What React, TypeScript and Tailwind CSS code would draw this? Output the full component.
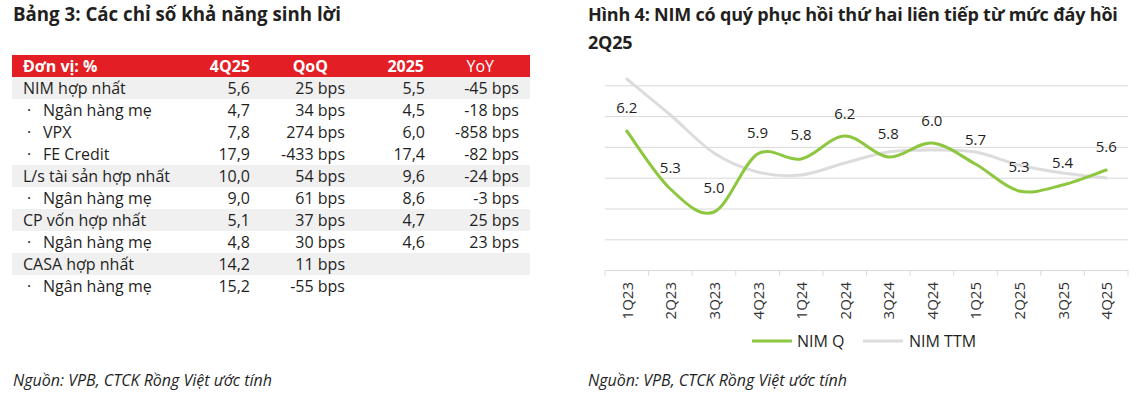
const rows = [
  { label: "NIM hợp nhất", sub: false, shade: true, q: "5,6", qoq: "25 bps", yr: "5,5", yoy: "-45 bps" },
  { label: "Ngân hàng mẹ", sub: true, shade: false, q: "4,7", qoq: "34 bps", yr: "4,5", yoy: "-18 bps" },
  { label: "VPX", sub: true, shade: false, q: "7,8", qoq: "274 bps", yr: "6,0", yoy: "-858 bps" },
  { label: "FE Credit", sub: true, shade: false, q: "17,9", qoq: "-433 bps", yr: "17,4", yoy: "-82 bps" },
  { label: "L/s tài sản hợp nhất", sub: false, shade: true, q: "10,0", qoq: "54 bps", yr: "9,6", yoy: "-24 bps" },
  { label: "Ngân hàng mẹ", sub: true, shade: false, q: "9,0", qoq: "61 bps", yr: "8,6", yoy: "-3 bps" },
  { label: "CP vốn hợp nhất", sub: false, shade: true, q: "5,1", qoq: "37 bps", yr: "4,7", yoy: "25 bps" },
  { label: "Ngân hàng mẹ", sub: true, shade: false, q: "4,8", qoq: "30 bps", yr: "4,6", yoy: "23 bps" },
  { label: "CASA hợp nhất", sub: false, shade: true, q: "14,2", qoq: "11 bps", yr: "", yoy: "" },
  { label: "Ngân hàng mẹ", sub: true, shade: false, q: "15,2", qoq: "-55 bps", yr: "", yoy: "" },
];

// chart data, page coordinates measured from the figure
const OX = 580;
const OY = 56;
const quarters = ["1Q23", "2Q23", "3Q23", "4Q23", "1Q24", "2Q24", "3Q24", "4Q24", "1Q25", "2Q25", "3Q25", "4Q25"];
const x0 = 605;
const x1 = 1128;
const step = (x1 - x0) / 12;
const cx = (i: number) => x0 + step * (i + 0.5) - OX;
const nimQ = [131, 189, 212, 154, 159, 136, 157, 143, 164, 191, 185, 170];
const nimTTM = [79, 115, 153, 172, 175, 163, 152, 150, 152, 165, 173, 178];
const labels = [
  { t: "6.2", y: 107 },
  { t: "5.3", y: 167 },
  { t: "5.0", y: 187 },
  { t: "5.9", y: 132 },
  { t: "5.8", y: 134 },
  { t: "6.2", y: 113 },
  { t: "5.8", y: 133 },
  { t: "6.0", y: 120 },
  { t: "5.7", y: 139 },
  { t: "5.3", y: 166 },
  { t: "5.4", y: 162 },
  { t: "5.6", y: 146 },
];
const grid = [55, 85.8, 116.6, 147.4, 178.2, 209, 239.8];
const axisY = 270.6;

function smooth(ys: number[]) {
  const p = ys.map((y, i) => [cx(i), y - OY]);
  let d = `M${p[0][0]},${p[0][1]}`;
  for (let i = 0; i < p.length - 1; i++) {
    const a = p[i - 1] || p[i];
    const b = p[i];
    const c = p[i + 1];
    const e = p[i + 2] || c;
    const c1x = b[0] + (c[0] - a[0]) / 6;
    const c1y = b[1] + (c[1] - a[1]) / 6;
    const c2x = c[0] - (e[0] - b[0]) / 6;
    const c2y = c[1] - (e[1] - b[1]) / 6;
    d += ` C${c1x},${c1y} ${c2x},${c2y} ${c[0]},${c[1]}`;
  }
  return d;
}

const font = { fontFamily: "'Open Sans', sans-serif" };

const NimChart = () => (
  <svg width={561} height={314} className="block" style={font}>
    {grid.map((g) => (
      <line key={g} x1={x0 - OX} x2={x1 - OX} y1={g - OY} y2={g - OY} stroke="#d9d9d9" strokeWidth={1} />
    ))}
    <line x1={x0 - OX} x2={x1 - OX} y1={axisY - OY} y2={axisY - OY} stroke="#d9d9d9" strokeWidth={1} />
    {Array.from({ length: 13 }).map((_, k) => (
      <line
        key={k}
        x1={x0 - OX + step * k}
        x2={x0 - OX + step * k}
        y1={axisY - OY}
        y2={axisY - OY + 5}
        stroke="#d9d9d9"
        strokeWidth={1}
      />
    ))}
    <path d={smooth(nimTTM)} fill="none" stroke="#dcdcdc" strokeWidth={3} strokeLinecap="round" />
    <path d={smooth(nimQ)} fill="none" stroke="#8dc63f" strokeWidth={3} strokeLinecap="round" />
    {labels.map((l, i) => (
      <text key={i} x={cx(i)} y={l.y - OY} textAnchor="middle" dominantBaseline="central" fontSize={15} fill="#1f1f1f">
        {l.t}
      </text>
    ))}
    {quarters.map((q, i) => (
      <text
        key={q}
        x={cx(i)}
        y={282 - OY}
        transform={`rotate(-90 ${cx(i)} ${282 - OY})`}
        textAnchor="end"
        dominantBaseline="central"
        fontSize={15}
        fill="#333333"
      >
        {q}
      </text>
    ))}
    {/* legend */}
    <line x1={752 - OX} x2={792 - OX} y1={341 - OY} y2={341 - OY} stroke="#8dc63f" strokeWidth={3} />
    <text x={797 - OX} y={341 - OY} dominantBaseline="central" fontSize={16} fill="#1f1f1f">
      NIM Q
    </text>
    <line x1={863 - OX} x2={903 - OX} y1={341 - OY} y2={341 - OY} stroke="#dcdcdc" strokeWidth={3} />
    <text x={909 - OX} y={341 - OY} dominantBaseline="central" fontSize={16} fill="#1f1f1f">
      NIM TTM
    </text>
  </svg>
);

export default function App() {
  return (
    <div className="flex w-[1141px] h-[401px] bg-white text-[#1f1f1f] overflow-hidden" style={font}>
      {/* Bảng 3 */}
      <div className="w-[580px] shrink-0 flex flex-col">
        <h2 className="pl-[13px] text-[18.7px] font-bold leading-[28px] text-[#231f20] whitespace-nowrap">
          Bảng 3: Các chỉ số khả năng sinh lời
        </h2>
        <div className="ml-[12px] mt-[27px] w-[518px] text-[16px]">
          <div className="grid grid-cols-[188px_50px_95px_81px_93px_11px] h-[22px] items-center bg-[#e31e24] text-white leading-none">
            <div className="pl-[11px] font-bold">Đơn vị: %</div>
            <div className="text-right font-bold">4Q25</div>
            <div className="text-right pr-[17px] font-bold">QoQ</div>
            <div className="text-right pr-[2px] font-bold">2025</div>
            <div className="text-right pr-[25px]">YoY</div>
            <div />
          </div>
          {rows.map((r, i) => (
            <div
              key={i}
              className={`grid grid-cols-[188px_50px_95px_81px_93px_11px] h-[22px] items-center leading-none ${
                r.shade ? "bg-[#f0f0f0]" : "bg-white"
              }`}
            >
              {r.sub ? (
                <div className="flex pl-[15px] whitespace-nowrap">
                  <span className="w-[16px]">·</span>
                  <span>{r.label}</span>
                </div>
              ) : (
                <div className="pl-[11px] whitespace-nowrap">{r.label}</div>
              )}
              <div className="text-right">{r.q}</div>
              <div className="text-right">{r.qoq}</div>
              <div className="text-right pr-[1px]">{r.yr}</div>
              <div className="text-right">{r.yoy}</div>
              <div />
            </div>
          ))}
        </div>
        <p className="mt-[73px] pl-[13px] text-[16px] italic leading-[20px] whitespace-nowrap">
          Nguồn: VPB, CTCK Rồng Việt ước tính
        </p>
      </div>

      {/* Hình 4 */}
      <div className="flex-1 flex flex-col">
        <h2 className="pl-[8px] text-[18px] tracking-[-0.2px] font-bold leading-[28px] text-[#231f20] whitespace-nowrap">
          Hình 4: NIM có quý phục hồi thứ hai liên tiếp từ mức đáy hồi
          <br />
          2Q25
        </h2>
        <NimChart />
        <p className="pl-[8px] text-[16px] italic leading-[20px] whitespace-nowrap">
          Nguồn: VPB, CTCK Rồng Việt ước tính
        </p>
      </div>
    </div>
  );
}
